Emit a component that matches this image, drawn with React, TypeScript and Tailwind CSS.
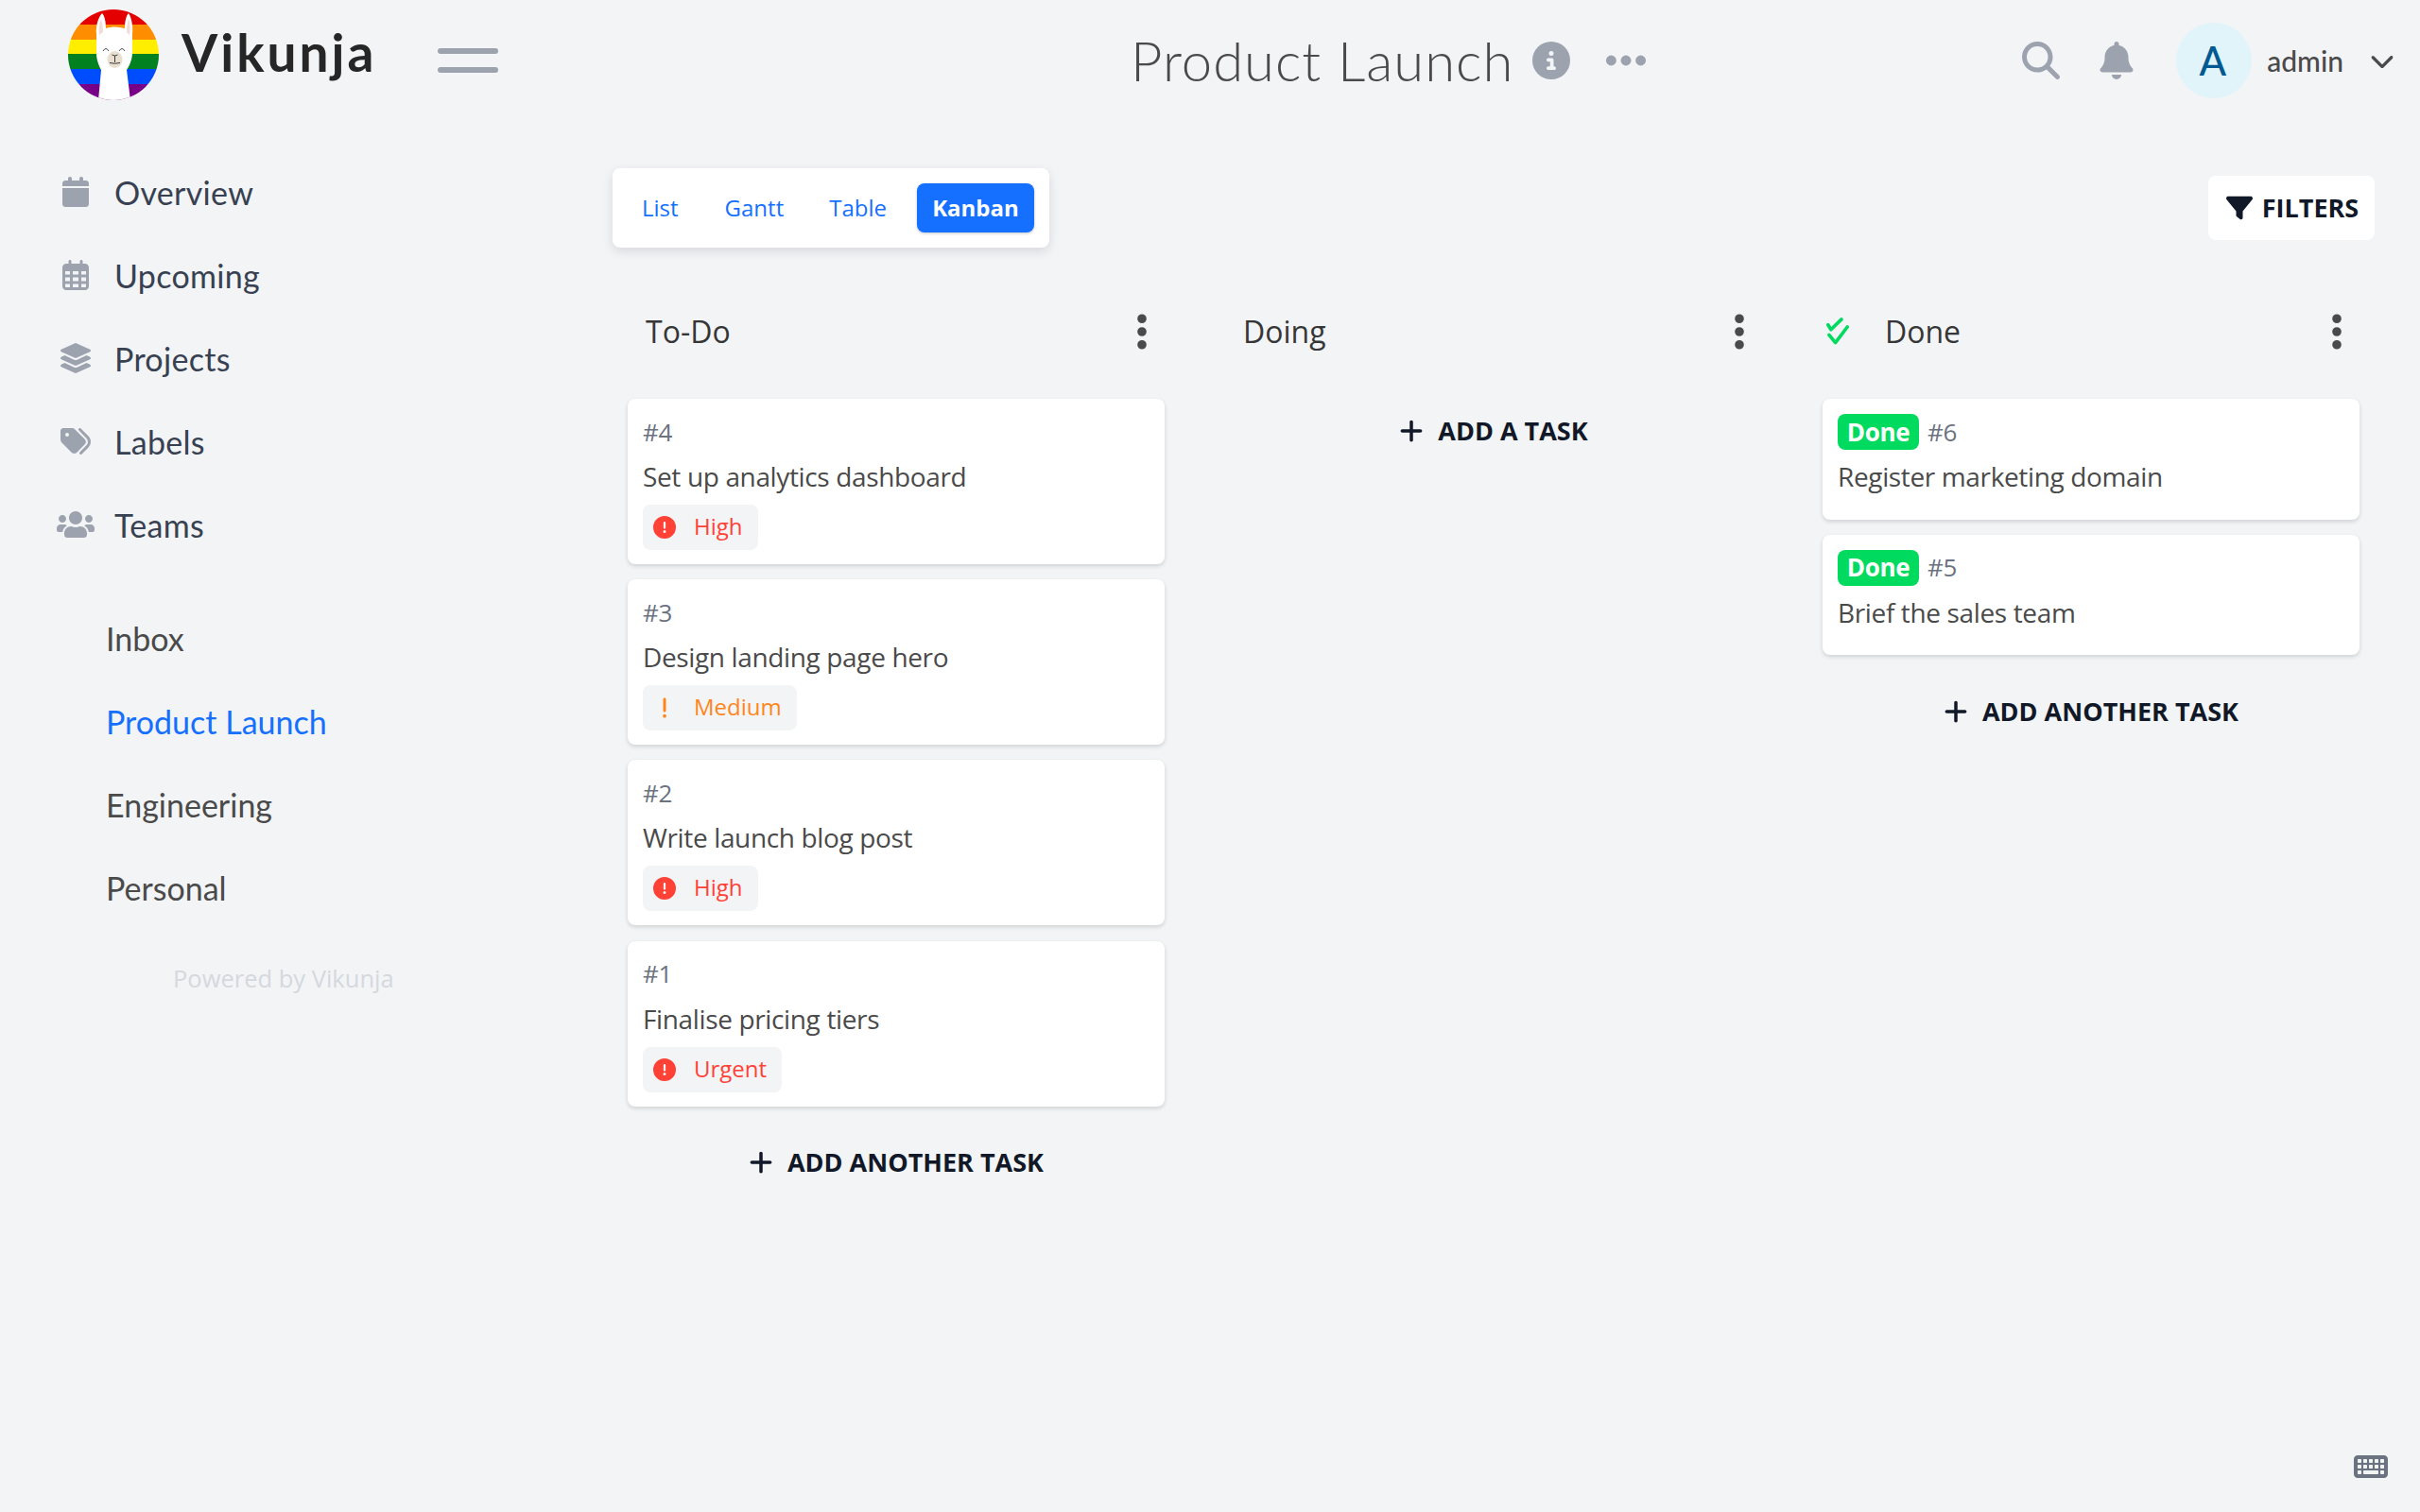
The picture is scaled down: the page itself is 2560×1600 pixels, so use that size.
import { FaLayerGroup, FaUsers } from "react-icons/fa";
import {
  FaBell,
  FaCalendar,
  FaChevronDown,
  FaCircleExclamation,
  FaCircleInfo,
  FaEllipsis,
  FaEllipsisVertical,
  FaExclamation,
  FaFilter,
  FaKeyboard,
  FaMagnifyingGlass,
  FaPlus,
  FaRegCalendarDays,
  FaTags,
} from "react-icons/fa6";

type Priority = "High" | "Medium" | "Urgent";

type Task = {
  id: number;
  title: string;
  priority?: Priority;
  done?: boolean;
};

const NAV = [
  { label: "Overview", icon: <FaCalendar className="h-[32px] w-[28px]" /> },
  { label: "Upcoming", icon: <FaRegCalendarDays className="h-[32px] w-[28px]" /> },
  { label: "Projects", icon: <FaLayerGroup className="h-[32px] w-[32px]" /> },
  { label: "Labels", icon: <FaTags className="h-[32px] w-[34px]" /> },
  { label: "Teams", icon: <FaUsers className="h-[32px] w-[40px]" /> },
];

const PROJECTS = ["Inbox", "Product Launch", "Engineering", "Personal"];

const TODO: Task[] = [
  { id: 4, title: "Set up analytics dashboard", priority: "High" },
  { id: 3, title: "Design landing page hero", priority: "Medium" },
  { id: 2, title: "Write launch blog post", priority: "High" },
  { id: 1, title: "Finalise pricing tiers", priority: "Urgent" },
];

const DONE: Task[] = [
  { id: 6, title: "Register marketing domain", done: true },
  { id: 5, title: "Brief the sales team", done: true },
];

function Logo() {
  return (
    <svg viewBox="0 0 96 96" className="h-[96px] w-[96px] shrink-0">
      <defs>
        <clipPath id="logo-circle">
          <circle cx="48" cy="48" r="48" />
        </clipPath>
      </defs>
      <g clipPath="url(#logo-circle)">
        <rect x="0" y="0" width="96" height="16" fill="#e50000" />
        <rect x="0" y="16" width="96" height="16" fill="#ff8d00" />
        <rect x="0" y="32" width="96" height="16" fill="#ffee00" />
        <rect x="0" y="47" width="96" height="16" fill="#028121" />
        <rect x="0" y="63" width="96" height="16" fill="#004cff" />
        <rect x="0" y="79" width="96" height="17" fill="#770088" />
        <path
          d="M36 4 C32 8 29 18 30 26 L30 46 C30 54 33 60 35 64 L32 96 L66 96 L62 64 C65 60 68 52 68 46 L68 26 C69 18 67 8 64 4 C61 7 60 14 60 20 C53 18 46 18 40 20 C40 14 39 7 36 4 Z"
          fill="#ffffff"
        />
        <path d="M35 10 C33 15 32 21 33 27 L37 24 C37 19 36 14 35 10 Z" fill="#f2dcd8" />
        <path d="M64 10 C66 15 66 21 65 27 L62 24 C62 19 63 14 64 10 Z" fill="#f2dcd8" />
        <ellipse cx="49.5" cy="53" rx="8" ry="9" fill="#e9dfd0" />
        <path d="M37 44 Q40 39 43 44 M54 44 Q57 39 60 44" fill="none" stroke="#3a3a3a" strokeWidth="0.9" />
        <path d="M46.5 48 Q49.5 50 52.5 48 M49.5 49 L49.5 56 M44 56.5 Q49.5 58 55 56.5" fill="none" stroke="#3a3a3a" strokeWidth="1" />
      </g>
    </svg>
  );
}

function DoubleCheck() {
  return (
    <svg viewBox="0 0 24 29" className="ml-[-15px] mr-[38px] h-[29px] w-[24px] text-[#00db60]">
      <path
        d="M1.8 7.7 L4.9 12.8 L16 1.9 M2.9 18.3 L9.6 26.7 L22.2 10"
        fill="none"
        stroke="currentColor"
        strokeWidth="3.6"
        strokeLinecap="round"
        strokeLinejoin="round"
      />
    </svg>
  );
}

function PriorityBadge({ priority }: { priority: Priority }) {
  const medium = priority === "Medium";
  return (
    <span
      className={`mt-[11px] flex h-[48px] w-fit items-center rounded-[8px] bg-[#f3f4f6] pl-[11px] pr-[16px] text-[24px] ${
        medium ? "text-[#ff851b]" : "text-[#ff4136]"
      }`}
    >
      <span className="flex w-[24px] justify-center">
        {medium ? <FaExclamation className="h-[24px] w-[24px]" /> : <FaCircleExclamation className="h-[24px] w-[24px]" />}
      </span>
      <span className="mb-[2px] ml-[19px]">{priority}</span>
    </span>
  );
}

function TaskCard({ task }: { task: Task }) {
  return (
    <div className={`rounded-[8px] bg-white px-[16px] pt-[16px] shadow-[0_2px_4px_rgba(17,24,39,0.16)] ${task.priority ? "h-[175px]" : "h-[127.6px]"}`}>
      <div className="flex h-[38px] items-center text-[26px] tracking-[-0.3px] text-[#6b7280]">
        {task.done && (
          <span className="mr-[9px] flex h-[38px] w-[86px] items-center justify-center rounded-[8px] bg-[#00db60] text-[26px] font-bold text-white">
            Done
          </span>
        )}
        <span>#{task.id}</span>
      </div>
      <p className="mt-[9px] h-[38px] text-[28px] leading-[38px] tracking-[-0.36px] text-[#4a4a4a]">{task.title}</p>
      {task.priority && <PriorityBadge priority={task.priority} />}
    </div>
  );
}

function AddTask({ label }: { label: string }) {
  return (
    <button className="flex h-[64px] items-center justify-center gap-[15px] text-[27px] font-bold text-[#111827]">
      <FaPlus className="h-[28px] w-[26px]" />
      {label}
    </button>
  );
}

function Column({
  title,
  tasks,
  add,
  done,
}: {
  title: string;
  tasks: Task[];
  add: string;
  done?: boolean;
}) {
  return (
    <div className="w-[600px] shrink-0 px-[16px]">
      <div className="flex h-[64px] items-center justify-between pl-[19px] pr-[17px] pt-[1px] text-[#363636]">
        <div className="flex items-center">
          {done && <DoubleCheck />}
          <h2 className="text-[32px]">{title}</h2>
        </div>
        <FaEllipsisVertical className="h-[44px] w-[14px] text-[#4a4a4a]" />
      </div>
      <div className="mt-[40px] flex flex-col gap-[16.2px]">
        {tasks.map((task) => (
          <TaskCard key={task.id} task={task} />
        ))}
      </div>
      <div className={`flex justify-center ${tasks.length ? "mt-[27.5px]" : "mt-[2px]"}`}>
        <AddTask label={add} />
      </div>
    </div>
  );
}

export default function App() {
  return (
    <div className="relative h-[1600px] w-[2560px] overflow-hidden bg-[#f3f4f6] font-['Open_Sans',sans-serif] text-[#4a4a4a]">
      <header className="flex h-[128px]">
        <div className="flex w-[1196px] shrink-0 items-start pl-[72px] pt-[10px]">
          <Logo />
          <span className="ml-[24px] mt-[10px] font-['Lato',sans-serif] text-[55px] font-bold leading-[70px] tracking-[3px] text-[#262626]">
            Vikunja
          </span>
          <button className="ml-[64px] mt-[41px] flex flex-col gap-[14px]">
            <span className="block h-[6px] w-[64px] rounded-full bg-[#9ca3af]" />
            <span className="block h-[6px] w-[64px] rounded-full bg-[#9ca3af]" />
          </button>
        </div>
        <div className="flex items-center">
          <h1 className="font-['Lato',sans-serif] text-[58px] font-light leading-[70px] tracking-[1px] text-[#4a4a4a]">Product Launch</h1>
          <FaCircleInfo className="ml-[20px] h-[40px] w-[40px] text-[#9ca3af]" />
          <FaEllipsis className="ml-[34px] h-[50px] w-[50px] text-[#9ca3af]" />
        </div>
        <div className="ml-auto flex items-center pr-[27px]">
          <FaMagnifyingGlass className="h-[40px] w-[40px] text-[#9ca3af]" />
          <FaBell className="ml-[42px] h-[40px] w-[36px] text-[#9ca3af]" />
          <span className="ml-[45px] flex h-[80px] w-[80px] items-center justify-center rounded-full bg-[#e1f4f9] pr-[3px] font-['Lato',sans-serif] text-[42px] font-medium text-[#005a91]">
            A
          </span>
          <span className="ml-[16px] font-['Lato',sans-serif] text-[30px] font-medium text-[#4a4a4a]">admin</span>
          <FaChevronDown className="ml-[28px] h-[26px] w-[26px] text-[#4a4a4a]" />
        </div>
      </header>

      <div className="flex">
        <aside className="w-[648px] shrink-0 pt-[31px] font-['Lato',sans-serif]">
          <nav>
            {NAV.map((item) => (
              <a key={item.label} className="flex h-[88px] items-center text-[34px] tracking-[0.3px] text-[#374151]">
                <span className="ml-[40px] mr-[1px] flex w-[80px] justify-center text-[#9ca3af]">{item.icon}</span>
                {item.label}
              </a>
            ))}
          </nav>
          <ul className="mt-[32px]">
            {PROJECTS.map((name) => (
              <li
                key={name}
                className={`flex h-[88px] items-center pl-[112px] text-[34px] ${
                  name === "Product Launch" ? "text-[#1570ff]" : "text-[#4a4a4a]"
                }`}
              >
                {name}
              </li>
            ))}
          </ul>
          <p className="mt-[33px] pl-[183px] font-['Open_Sans',sans-serif] text-[25.5px] text-[#d5d8de]">Powered by Vikunja</p>
        </aside>

        <main className="min-w-0 flex-1 pt-[50px]">
          <div className="flex items-start justify-between pr-[48px]">
            <div className="flex h-[84px] items-center gap-[16px] rounded-[8px] bg-white p-[16px] text-[24px] text-[#1570ff] shadow-[0_4px_12px_rgba(17,24,39,0.12)]">
              <a className="pl-[15px] pr-[17px]">List</a>
              <a className="px-[16px]">Gantt</a>
              <a className="px-[16px]">Table</a>
              <a className="flex h-[52px] w-[124px] items-center justify-center rounded-[8px] bg-[#1570ff] font-bold text-white shadow-[0_1px_3px_rgba(17,24,39,0.25)]">
                Kanban
              </a>
            </div>
            <button className="mt-[8px] flex h-[68px] w-[176px] items-center justify-center gap-[10px] rounded-[8px] bg-white pl-[2px] text-[27px] font-bold text-[#111827]">
              <FaFilter className="h-[28px] w-[28px]" />
              FILTERS
            </button>
          </div>

          <div className="mt-[56px] flex gap-[32px]">
            <Column title="To-Do" tasks={TODO} add="ADD ANOTHER TASK" />
            <Column title="Doing" tasks={[]} add="ADD A TASK" />
            <Column title="Done" tasks={DONE} add="ADD ANOTHER TASK" done />
          </div>
        </main>
      </div>

      <FaKeyboard className="absolute left-[2490px] top-[1534px] h-[36px] w-[36px] text-[#6b7280]" />
    </div>
  );
}
